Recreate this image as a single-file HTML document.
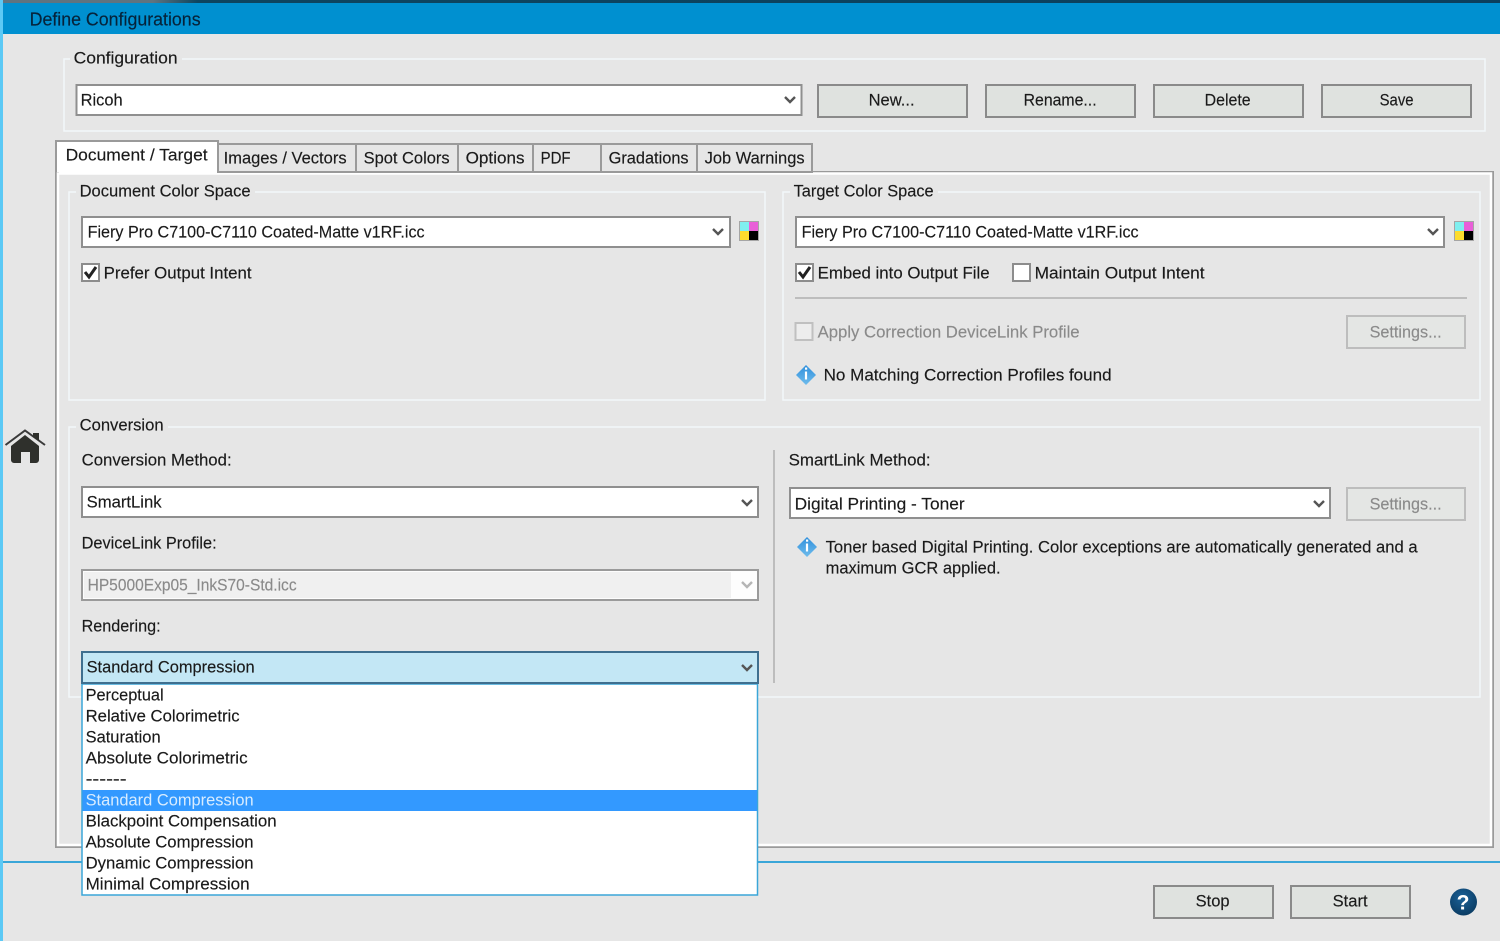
<!DOCTYPE html>
<html><head><meta charset="utf-8"><title>Define Configurations</title>
<style>
html,body{margin:0;padding:0;background:#e6e6e6;width:1500px;height:941px;overflow:hidden}
svg{display:block;filter:blur(.3px)}
text{font-family:"Liberation Sans",sans-serif;font-size:17px;fill:#1a1a1a;stroke:#1a1a1a;stroke-width:.15px;transform:translate(-.4px,-.4px)}
text.g{fill:#8a8a8a;stroke:#8a8a8a}
.ln{fill:none;stroke:#f2f7fa;stroke-width:1.5}
.f{fill:#fff;stroke:#8f8f8f;stroke-width:2}
.b{fill:#dfe2df;stroke:#8a8a8a;stroke-width:2}
.bd{fill:#e4e6e4;stroke:#bdbdbd;stroke-width:2}
.cv{fill:none;stroke:#555;stroke-width:2.4}
</style></head><body>
<svg width="1500" height="941" viewBox="0 0 1500 941" xmlns="http://www.w3.org/2000/svg">
<defs>
<linearGradient id="top" x1="0" x2="1" y1="0" y2="0"><stop offset="0" stop-color="#5f7480"/><stop offset=".1" stop-color="#5f7480"/><stop offset=".13" stop-color="#0d4560"/><stop offset="1" stop-color="#0c3f5c"/></linearGradient>
<linearGradient id="inf" x1="0" x2="0" y1="0" y2="1"><stop offset="0" stop-color="#2f8fdc"/><stop offset="1" stop-color="#6fbcec"/></linearGradient>
<radialGradient id="hlp" cx=".45" cy=".35" r=".7"><stop offset="0" stop-color="#1a6198"/><stop offset="1" stop-color="#0a3a60"/></radialGradient>
</defs>
<rect width="1500" height="941" fill="#e6e6e6"/>
<rect x="0" y="0" width="3" height="941" fill="#5cc9f5"/>
<rect x="3" y="0" width="1497" height="3" fill="url(#top)"/>
<rect x="3" y="3" width="1497" height="31" fill="#0090d0"/>
<text x="30" y="26" textLength="171" lengthAdjust="spacingAndGlyphs" style="font-size:18px;fill:#06233a;stroke:#06233a">Define Configurations</text>

<!-- Configuration group -->
<path class="ln" d="M70 59H64V131H1485V59H182"/>
<text x="74" y="64" textLength="104" lengthAdjust="spacingAndGlyphs">Configuration</text>
<rect class="f" x="76.500" y="85" width="725" height="30"/>
<text x="81" y="106" textLength="42" lengthAdjust="spacingAndGlyphs">Ricoh</text>
<path class="cv" d="M785 97l5 5 5-5"/>
<rect class="b" x="818" y="85" width="149" height="32"/><text x="869" y="106" textLength="46" lengthAdjust="spacingAndGlyphs">New...</text>
<rect class="b" x="986" y="85" width="149" height="32"/><text x="1024" y="106" textLength="73" lengthAdjust="spacingAndGlyphs">Rename...</text>
<rect class="b" x="1154" y="85" width="149" height="32"/><text x="1205" y="106" textLength="46" lengthAdjust="spacingAndGlyphs">Delete</text>
<rect class="b" x="1322" y="85" width="149" height="32"/><text x="1380" y="106" textLength="34" lengthAdjust="spacingAndGlyphs">Save</text>

<!-- bottom blue line -->
<rect x="3" y="861" width="1497" height="2" fill="#3aa6d8"/>

<!-- Tab pane -->
<rect x="56" y="172" width="1437" height="675" fill="#e6e6e6" stroke="#9a9a9a" stroke-width="2"/>
<path d="M58 173.500H1491V845H58Z" fill="none" stroke="#fff" stroke-width="2.500"/>
<!-- tabs -->
<g fill="#e6e6e6" stroke="#9a9a9a" stroke-width="2">
<rect x="218" y="144" width="138" height="28"/>
<rect x="356" y="144" width="102" height="28"/>
<rect x="458" y="144" width="75" height="28"/>
<rect x="533" y="144" width="68" height="28"/>
<rect x="601" y="144" width="96" height="28"/>
<rect x="697" y="144" width="115" height="28"/>
</g>
<path d="M56 172V141H218V173" fill="#fff" stroke="#9a9a9a" stroke-width="2"/>
<rect x="59" y="142" width="158" height="32" fill="#fff"/>
<text x="66" y="161" textLength="142" lengthAdjust="spacingAndGlyphs">Document / Target</text>
<text x="224" y="164" textLength="123" lengthAdjust="spacingAndGlyphs">Images / Vectors</text>
<text x="364" y="164" textLength="86" lengthAdjust="spacingAndGlyphs">Spot Colors</text>
<text x="466" y="164" textLength="59" lengthAdjust="spacingAndGlyphs">Options</text>
<text x="541" y="164" textLength="30" lengthAdjust="spacingAndGlyphs">PDF</text>
<text x="609" y="164" textLength="80" lengthAdjust="spacingAndGlyphs">Gradations</text>
<text x="705" y="164" textLength="100" lengthAdjust="spacingAndGlyphs">Job Warnings</text>

<!-- Document Color Space -->
<path class="ln" d="M76 192H69V400H765V192H255"/>
<text x="80" y="197" textLength="171" lengthAdjust="spacingAndGlyphs">Document Color Space</text>
<rect class="f" x="82" y="217" width="648" height="30"/>
<text x="88" y="238" textLength="337" lengthAdjust="spacingAndGlyphs">Fiery Pro C7100-C7110 Coated-Matte v1RF.icc</text>
<path class="cv" d="M713 229l5 5 5-5"/>
<rect x="739" y="221" width="20" height="20" fill="#a5a5a5"/>
<rect x="740" y="222" width="9" height="9" fill="#7fefef"/>
<rect x="749" y="222" width="9" height="9" fill="#e95fd8"/>
<rect x="740" y="231" width="9" height="9" fill="#fddc2d"/>
<rect x="749" y="231" width="9" height="9" fill="#000"/>
<rect x="82" y="264" width="17" height="17" fill="#fff" stroke="#8c8c8c" stroke-width="2"/>
<path d="M85 272l4 5 7-10" fill="none" stroke="#222" stroke-width="3"/>
<text x="104" y="279" textLength="148" lengthAdjust="spacingAndGlyphs">Prefer Output Intent</text>

<!-- Target Color Space -->
<path class="ln" d="M790 192H783V400H1480V192H938"/>
<text x="794" y="197" textLength="140" lengthAdjust="spacingAndGlyphs">Target Color Space</text>
<rect class="f" x="796" y="217" width="648" height="30"/>
<text x="802" y="238" textLength="337" lengthAdjust="spacingAndGlyphs">Fiery Pro C7100-C7110 Coated-Matte v1RF.icc</text>
<path class="cv" d="M1428 229l5 5 5-5"/>
<rect x="1454" y="221" width="20" height="20" fill="#a5a5a5"/>
<rect x="1455" y="222" width="9" height="9" fill="#7fefef"/>
<rect x="1464" y="222" width="9" height="9" fill="#e95fd8"/>
<rect x="1455" y="231" width="9" height="9" fill="#fddc2d"/>
<rect x="1464" y="231" width="9" height="9" fill="#000"/>
<rect x="796" y="264" width="17" height="17" fill="#fff" stroke="#8c8c8c" stroke-width="2"/>
<path d="M799 272l4 5 7-10" fill="none" stroke="#222" stroke-width="3"/>
<text x="818" y="279" textLength="172" lengthAdjust="spacingAndGlyphs">Embed into Output File</text>
<rect x="1013" y="264" width="17" height="17" fill="#fff" stroke="#8c8c8c" stroke-width="2"/>
<text x="1035" y="279" textLength="170" lengthAdjust="spacingAndGlyphs">Maintain Output Intent</text>
<rect x="795" y="297" width="672" height="2" fill="#bdbdbd"/>
<rect x="795.500" y="323" width="17" height="17" fill="#ededed" stroke="#c0c0c0" stroke-width="2"/>
<text class="g" x="818" y="338" textLength="262" lengthAdjust="spacingAndGlyphs">Apply Correction DeviceLink Profile</text>
<rect class="bd" x="1347" y="316" width="118" height="32"/>
<text class="g" x="1370" y="338" textLength="72" lengthAdjust="spacingAndGlyphs">Settings...</text>
<path d="M806 365l10 10-10 10-10-10z" fill="url(#inf)"/>
<path d="M806 371.500v8" stroke="#fff" stroke-width="2.200"/><rect x="805" y="367.500" width="2.200" height="2.200" fill="#fff"/>
<text x="824" y="381" textLength="288" lengthAdjust="spacingAndGlyphs">No Matching Correction Profiles found</text>

<!-- Conversion -->
<path class="ln" d="M76 427H69V697H1480V427H168"/>
<text x="80" y="431" textLength="84" lengthAdjust="spacingAndGlyphs">Conversion</text>
<text x="82" y="466" textLength="150" lengthAdjust="spacingAndGlyphs">Conversion Method:</text>
<rect class="f" x="82" y="487" width="676" height="30"/>
<text x="87" y="508" textLength="75" lengthAdjust="spacingAndGlyphs">SmartLink</text>
<path class="cv" d="M742 500l5 5 5-5"/>
<text x="82" y="549" textLength="135" lengthAdjust="spacingAndGlyphs">DeviceLink Profile:</text>
<rect x="82" y="570" width="676" height="30" fill="#fdfdfd" stroke="#9a9a9a" stroke-width="2"/>
<rect x="84" y="572" width="647" height="26" fill="#f0f0f0"/>
<text class="g" x="88" y="591" textLength="209" lengthAdjust="spacingAndGlyphs">HP5000Exp05_InkS70-Std.icc</text>
<path d="M742 582l5 5 5-5" fill="none" stroke="#b5b5b5" stroke-width="2.400"/>
<text x="82" y="632" textLength="79" lengthAdjust="spacingAndGlyphs">Rendering:</text>

<rect x="773" y="450" width="2" height="233" fill="#bdbdbd"/>
<text x="789" y="466" textLength="142" lengthAdjust="spacingAndGlyphs">SmartLink Method:</text>
<rect class="f" x="790" y="488" width="540" height="30"/>
<text x="795" y="510" textLength="170" lengthAdjust="spacingAndGlyphs">Digital Printing - Toner</text>
<path class="cv" d="M1314 501l5 5 5-5"/>
<rect class="bd" x="1347" y="488" width="118" height="32"/>
<text class="g" x="1370" y="510" textLength="72" lengthAdjust="spacingAndGlyphs">Settings...</text>
<path d="M807 537l10 10-10 10-10-10z" fill="url(#inf)"/>
<path d="M807 543.500v8" stroke="#fff" stroke-width="2.200"/><rect x="806" y="539.500" width="2.200" height="2.200" fill="#fff"/>
<text x="826" y="553" textLength="592" lengthAdjust="spacingAndGlyphs">Toner based Digital Printing. Color exceptions are automatically generated and a</text>
<text x="826" y="574" textLength="175" lengthAdjust="spacingAndGlyphs">maximum GCR applied.</text>

<!-- Dropdown -->
<rect x="82" y="684" width="675.500" height="211" fill="#fff" stroke="#3aa6d8" stroke-width="1.500"/>
<rect x="82" y="652" width="676" height="31" fill="#c3e7f5" stroke="#3f6f8f" stroke-width="2"/>
<text x="87" y="673" textLength="168" lengthAdjust="spacingAndGlyphs">Standard Compression</text>
<path class="cv" d="M742 665l5 5 5-5"/>
<rect x="82.500" y="790" width="674.500" height="21" fill="#3399ff"/>
<text x="86" y="701" textLength="78" lengthAdjust="spacingAndGlyphs">Perceptual</text>
<text x="86" y="722" textLength="154" lengthAdjust="spacingAndGlyphs">Relative Colorimetric</text>
<text x="86" y="743" textLength="75" lengthAdjust="spacingAndGlyphs">Saturation</text>
<text x="86" y="764" textLength="162" lengthAdjust="spacingAndGlyphs">Absolute Colorimetric</text>
<text x="86" y="785" textLength="41" lengthAdjust="spacingAndGlyphs">------</text>
<text x="86" y="806" textLength="168" lengthAdjust="spacingAndGlyphs" style="fill:#d8ecff;stroke:none">Standard Compression</text>
<text x="86" y="827" textLength="191" lengthAdjust="spacingAndGlyphs">Blackpoint Compensation</text>
<text x="86" y="848" textLength="168" lengthAdjust="spacingAndGlyphs">Absolute Compression</text>
<text x="86" y="869" textLength="168" lengthAdjust="spacingAndGlyphs">Dynamic Compression</text>
<text x="86" y="890" textLength="164" lengthAdjust="spacingAndGlyphs">Minimal Compression</text>

<!-- Home icon -->
<path d="M5.500 445L25 430.500 45 445" fill="none" stroke="#3a3a3a" stroke-width="2"/>
<path d="M33 433h6v8l-6-4z" fill="#2f302c"/>
<path d="M11 446L25 435 39 446V460a3 3 0 0 1-3 3H30V452H21V463H14a3 3 0 0 1-3-3z" fill="#2f302c"/>

<!-- Bottom buttons -->
<rect class="b" x="1154" y="886" width="119" height="32"/><text x="1196" y="907" textLength="34" lengthAdjust="spacingAndGlyphs">Stop</text>
<rect class="b" x="1291" y="886" width="119" height="32"/><text x="1333" y="907" textLength="35" lengthAdjust="spacingAndGlyphs">Start</text>
<circle cx="1463.500" cy="902" r="13.500" fill="url(#hlp)"/>
<text x="1463.500" y="910" text-anchor="middle" style="font-size:21px;font-weight:bold;fill:#fff;stroke:none">?</text>
</svg>
</body></html>
